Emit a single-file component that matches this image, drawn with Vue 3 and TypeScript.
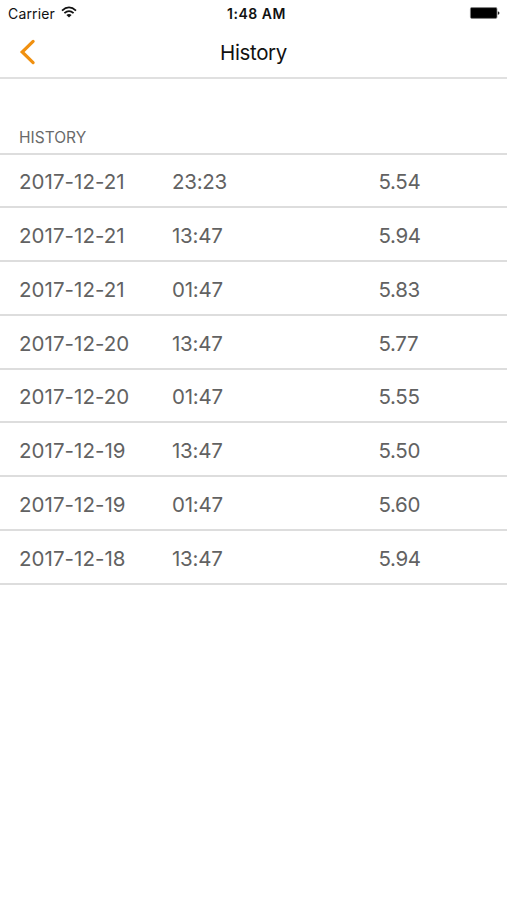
<script setup lang="ts">
interface Entry {
  date: string
  time: string
  value: string
}

const entries: Entry[] = [
  { date: '2017-12-21', time: '23:23', value: '5.54' },
  { date: '2017-12-21', time: '13:47', value: '5.94' },
  { date: '2017-12-21', time: '01:47', value: '5.83' },
  { date: '2017-12-20', time: '13:47', value: '5.77' },
  { date: '2017-12-20', time: '01:47', value: '5.55' },
  { date: '2017-12-19', time: '13:47', value: '5.50' },
  { date: '2017-12-19', time: '01:47', value: '5.60' },
  { date: '2017-12-18', time: '13:47', value: '5.94' },
]
</script>

<template>
  <div class="screen">
    <div class="status">
      <div class="carrier">
        <span class="carrier-name">Carrier</span>
        <svg class="wifi" viewBox="0 0 16 12" width="16" height="12">
          <g fill="none" stroke="#111" stroke-width="1.8">
            <path d="M1 4.6 Q8 -1.8 15 4.6" />
            <path d="M3.4 7.2 Q8 3 12.6 7.2" />
          </g>
          <path d="M5.4 9 Q8 6.8 10.6 9 L8 11.6 Z" fill="#111" />
        </svg>
      </div>
      <span class="clock">1:48 AM</span>
      <div class="power">
        <svg viewBox="0 0 31 12" width="31" height="12">
          <rect x="1.4" y="0.6" width="26.6" height="10.8" rx="1.3" fill="#000" stroke="#888" stroke-width="0.7" />
          <path d="M28.8 4.2 Q30.5 4.6 30.5 6 Q30.5 7.4 28.8 7.8 Z" fill="#222" />
        </svg>
      </div>
    </div>
    <header class="nav">
      <button class="back" aria-label="Back">
        <svg viewBox="0 0 17 26" width="17" height="26">
          <path d="M14.1 2.4 L3.2 13 L14.1 23.6" fill="none" stroke="#f09010" stroke-width="3.2" stroke-linecap="round" />
        </svg>
      </button>
      <h1 class="title">History</h1>
    </header>
    <h2 class="section">HISTORY</h2>
    <ul class="list">
      <li v-for="(entry, i) in entries" :key="i" class="row">
        <span class="date">{{ entry.date }}</span>
        <span class="time">{{ entry.time }}</span>
        <span class="value">{{ entry.value }}</span>
      </li>
    </ul>
  </div>
</template>

<style>
body {
  margin: 0;
  background: #fff;
}
</style>

<style scoped>
.screen {
  width: 507px;
  height: 900px;
  overflow: hidden;
  background: #fff;
  font-family: Inter, sans-serif;
}
.status {
  display: grid;
  grid-template-columns: 1fr auto 1fr;
  align-items: center;
  height: 26px;
  padding: 0 7px 0 8px;
  box-sizing: border-box;
  color: #111;
}
.carrier {
  display: flex;
  align-items: center;
  gap: 6px;
}
.carrier-name {
  font-size: 14px;
  letter-spacing: 0.15px;
}
.wifi {
  margin-top: -2px;
}
.clock {
  padding-left: 5px;
  font-size: 14px;
  font-weight: 600;
  letter-spacing: 0.5px;
}
.power {
  display: flex;
  justify-content: flex-end;
}
.nav {
  display: grid;
  grid-template-columns: 60px 1fr 60px;
  align-items: center;
  height: 53px;
  box-sizing: border-box;
  border-bottom: 2px solid #e0e0e0;
}
.back {
  display: flex;
  padding: 0 0 0 19px;
  border: 0;
  background: none;
}
.title {
  margin: 0;
  padding: 2px 0 0;
  text-align: center;
  font-size: 20.5px;
  letter-spacing: -0.35px;
  font-weight: 400;
  color: #111;
}
.section {
  box-sizing: border-box;
  height: 75.7px;
  margin: 0;
  padding: 49px 19px 0;
  border-bottom: 2px solid #ddd;
  font-size: 15.5px;
  line-height: 20px;
  font-weight: 400;
  color: #6a6a6a;
}
.list {
  margin: 0;
  padding: 0;
  list-style: none;
}
.row {
  display: grid;
  grid-template-columns: 153px 206.5px 1fr;
  align-items: center;
  box-sizing: border-box;
  height: 53.75px;
  padding: 2.4px 0 0 19px;
  border-bottom: 2px solid #ddd;
  font-size: 20.5px;
  color: #626262;
}
.date {
  letter-spacing: 0.05px;
}
.time,
.value {
  letter-spacing: -0.25px;
}
.value {
  letter-spacing: -0.35px;
}
</style>
